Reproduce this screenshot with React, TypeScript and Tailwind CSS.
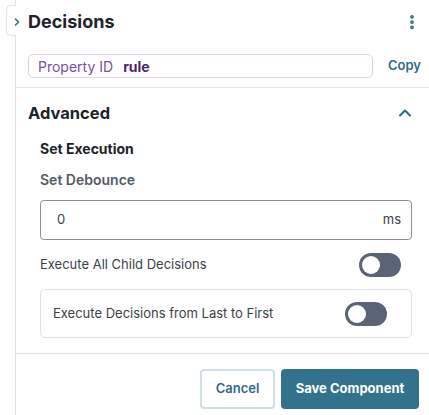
import { ChevronRight, ChevronUp, EllipsisVertical } from 'lucide-react';

function Toggle() {
    return (
        <div className="flex h-[24px] w-[42px] items-center rounded-full bg-[#5b6475] p-[3px]">
            <div className="h-[18px] w-[18px] rounded-full bg-white" />
        </div>
    );
}

export default function App() {
    return (
        <div
            className="relative h-[415px] w-[429px] overflow-hidden bg-white"
            style={{ fontFamily: 'Inter, "Liberation Sans", sans-serif' }}
        >
            <div className="ml-[15px] flex h-full flex-col border-l border-[#dfe2e6]">
                {/* header */}
                <div className="flex h-[43px] items-center justify-between pl-[12px] pr-[8px]">
                    <h1 className="text-[18px] font-bold text-[#1d2229]">Decisions</h1>
                    <EllipsisVertical size={18} strokeWidth={3} className="text-[#2f6b85]" />
                </div>

                <div className="mt-[11px] flex items-center gap-[15px] pl-[12px] pr-[8px]">
                    <div className="flex h-[24px] flex-1 items-center gap-[10px] rounded-[5px] border border-[#e3cdef] px-[9px] text-[14px]">
                        <span className="text-[#7b4f9e]">Property ID</span>
                        <span className="font-bold text-[#4a2566]">rule</span>
                    </div>
                    <span className="text-[13px] font-semibold text-[#2f6b85]">Copy</span>
                </div>

                <div className="mt-[9px] border-t border-[#dfe2e6]" />

                {/* advanced section */}
                <div className="flex h-[46px] items-center justify-between pl-[12px] pr-[14px] pt-[4px]">
                    <h2 className="text-[16.5px] font-bold text-[#1d2229]">Advanced</h2>
                    <ChevronUp size={20} strokeWidth={2.5} className="text-[#2f6b85]" />
                </div>

                <div className="flex flex-col pl-[24px] pr-[17px]">
                    <h3 className="mt-[5px] text-[14px] font-bold leading-[20px] text-[#1d2229]">Set Execution</h3>
                    <label className="mt-[11px] text-[14px] font-semibold leading-[20px] text-[#545b66]">Set Debounce</label>
                    <div className="mt-[10px] flex h-[40px] items-center justify-between rounded-[4px] border border-[#8b9099] pl-[16px] pr-[10px] text-[13px] text-[#3a3f47]">
                        <span>0</span>
                        <span>ms</span>
                    </div>

                    <div className="mt-[13px] flex items-center justify-between pr-[11px]">
                        <span className="text-[13px] text-[#3a3f47]">Execute All Child Decisions</span>
                        <Toggle />
                    </div>

                    <div className="mt-[12px] flex h-[49px] items-center justify-between rounded-[5px] border border-[#dfe2e6] pl-[12px] pr-[24px]">
                        <span className="text-[13px] text-[#3a3f47]">Execute Decisions from Last to First</span>
                        <Toggle />
                    </div>
                </div>

                <div className="mt-[15px] border-t border-[#dfe2e6]" />

                <div className="mt-[15px] flex justify-end gap-[6px] pr-[10px]">
                    <button className="h-[40px] w-[75px] rounded-[4px] border-2 border-[#cfdfe6] text-[13px] font-semibold text-[#2f6b85]">
                        Cancel
                    </button>
                    <button className="h-[40px] w-[138px] rounded-[4px] bg-[#33728c] text-[13px] font-bold text-white">
                        Save Component
                    </button>
                </div>
            </div>

            {/* collapse tab */}
            <div className="absolute left-[6px] top-[5px] h-[31px] w-[10px] rounded-l-[5px] border border-r-0 border-[#dfe2e6] bg-white" />
            <ChevronRight size={12} strokeWidth={3} className="absolute left-[11px] top-[16px] text-[#2f6b85]" />
        </div>
    );
}
